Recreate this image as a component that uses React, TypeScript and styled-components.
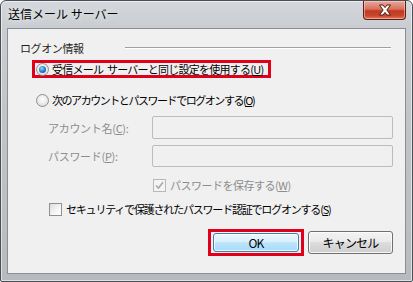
import React from "react";
import styled, { createGlobalStyle } from "styled-components";

const Global = createGlobalStyle`
  html, body { margin: 0; padding: 0; background: #ffffff; }
  #root { width: 413px; height: 282px; }
`;

const FONT = `"Noto Sans CJK JP", "Noto Sans", sans-serif`;

const Window = styled.div`
  box-sizing: border-box;
  width: 413px;
  height: 282px;
  border: 1px solid #4a4f55;
  border-radius: 6px 6px 2px 2px;
  background: linear-gradient(180deg, #d4d8dc 0%, #c9cdd1 10%, #c2c5c8 40%, #b8bbbe 100%);
  padding: 0 6px 7px 6px;
  display: flex;
  flex-direction: column;
  font-family: ${FONT};
  font-size: 11px;
  color: #000;
  box-shadow: inset 0 0 0 1px rgba(255, 255, 255, 0.55);
`;

const TitleBar = styled.div`
  height: 27px;
  display: flex;
  align-items: flex-start;
  justify-content: space-between;
  flex-shrink: 0;
`;

const Title = styled.div`
  padding: 6px 0 0 1px;
  font-size: 12px;
  line-height: 14px;
  color: #000;
  text-shadow: 0 0 6px rgba(255, 255, 255, 0.9);
`;

const CloseButton = styled.div`
  box-sizing: border-box;
  width: 43px;
  height: 19px;
  border: 1px solid #5a1f17;
  border-top: none;
  border-radius: 0 0 4px 4px;
  background: linear-gradient(180deg, #e9a99c 0%, #d9705d 45%, #c0391f 55%, #c7452c 80%, #e07558 100%);
  display: flex;
  align-items: center;
  justify-content: center;
  box-shadow: inset 0 0 0 1px rgba(255, 220, 210, 0.5);
`;

const Client = styled.div`
  flex: 1;
  box-sizing: border-box;
  border: 1px solid #8b8f94;
  background: #f0f0f0;
  display: flex;
  flex-direction: column;
  padding: 11px 0 0 0;
`;

const GroupHeader = styled.div`
  display: flex;
  align-items: center;
  height: 16px;
  padding: 0 14px 0 12px;
`;

const GroupLabel = styled.span`
  color: #1e1e1e;
  width: 105px;
  letter-spacing: -0.4px;
`;

const GroupLine = styled.div`
  flex: 1;
  height: 0;
  border-top: 1px solid #a0a0a0;
  border-bottom: 1px solid #ffffff;
`;

const Highlight = styled.div`
  box-sizing: border-box;
  align-self: flex-start;
  margin: 4px 0 0 24px;
  width: 239px;
  height: 18px;
  border: 3px solid #e1001a;
  display: flex;
  align-items: center;
  padding-left: 1px;
`;

const RadioRow = styled.label<{ $indent?: number; $top?: number }>`
  display: flex;
  align-items: center;
  height: 16px;
  margin: ${(p) => p.$top ?? 0}px 0 0 ${(p) => p.$indent ?? 0}px;
  gap: 3px;
  white-space: nowrap;
`;

const Text = styled.span<{ $ls: number }>`
  letter-spacing: ${(p) => p.$ls}px;
`;

const Gap = styled.span`
  display: inline-block;
  width: 2px;
`;

const RadioDot = styled.span<{ $checked?: boolean }>`
  box-sizing: border-box;
  width: 13px;
  height: 13px;
  border-radius: 50%;
  border: 1px solid #8e8f8f;
  background: radial-gradient(circle at 50% 40%, #ffffff 0%, #e6e6e6 60%, #cfcfcf 100%);
  display: flex;
  align-items: center;
  justify-content: center;
  flex-shrink: 0;
  &::after {
    content: "";
    display: ${(p) => (p.$checked ? "block" : "none")};
    width: 7px;
    height: 7px;
    border-radius: 50%;
    background: radial-gradient(circle at 40% 35%, #9fd6ff 0%, #2f86d6 45%, #0b3f86 100%);
  }
`;

const Underline = styled.span`
  text-decoration: underline;
  text-underline-offset: 1px;
`;

const FieldRow = styled.div<{ $top: number; $h: number }>`
  display: flex;
  align-items: center;
  height: ${(p) => p.$h}px;
  margin: ${(p) => p.$top}px 0 0 0;
  padding: 0 12px 0 40px;
`;

const FieldLabel = styled.span`
  width: 104px;
  color: #8d8d8d;
  white-space: nowrap;
  letter-spacing: -0.3px;
`;

const TextBox = styled.div`
  box-sizing: border-box;
  flex: 1;
  height: 100%;
  border: 1px solid #bcbcbc;
  border-radius: 2px;
  background: #f0f0f0;
`;

const CheckRow = styled.div<{ $indent: number; $top: number; $disabled?: boolean }>`
  display: flex;
  align-items: center;
  height: 16px;
  gap: 4px;
  margin: ${(p) => p.$top}px 0 0 ${(p) => p.$indent}px;
  color: ${(p) => (p.$disabled ? "#8d8d8d" : "#000")};
  white-space: nowrap;
`;

const Box = styled.span<{ $disabled?: boolean }>`
  box-sizing: border-box;
  width: 13px;
  height: 13px;
  border: 1px solid ${(p) => (p.$disabled ? "#b8b8b8" : "#8e8f8f")};
  background: ${(p) =>
    p.$disabled ? "#f4f4f4" : "linear-gradient(135deg, #dcdcdc 0%, #f6f6f6 60%, #ffffff 100%)"};
  display: flex;
  align-items: center;
  justify-content: center;
  flex-shrink: 0;
`;

const ButtonBar = styled.div`
  display: flex;
  justify-content: flex-end;
  align-items: center;
  gap: 4px;
  margin: 12px 12px 0 0;
`;

const OkFrame = styled.div`
  box-sizing: border-box;
  border: 3px solid #e1001a;
  padding: 1px 2px;
  width: 96px;
  height: 27px;
  display: flex;
`;

const Button = styled.div<{ $primary?: boolean }>`
  box-sizing: border-box;
  width: ${(p) => (p.$primary ? "86px" : "85px")};
  height: ${(p) => (p.$primary ? "100%" : "23px")};
  border: 1px solid ${(p) => (p.$primary ? "#3c7fb1" : "#707070")};
  border-radius: 3px;
  background: ${(p) =>
    p.$primary
      ? "linear-gradient(180deg, #eaf6fd 0%, #d9f0fc 45%, #bee6fd 50%, #a7d9f5 100%)"
      : "linear-gradient(180deg, #f2f2f2 0%, #ebebeb 45%, #dddddd 50%, #cfcfcf 100%)"};
  box-shadow: inset 0 0 0 1px rgba(255, 255, 255, 0.8);
  display: flex;
  align-items: center;
  justify-content: center;
  color: #000;
  font-size: 12px;
  letter-spacing: -0.8px;
`;

const CloseIcon = () => (
  <svg width="14" height="12" viewBox="0 0 14 12">
    <path
      d="M1.5 1 L5 1 L7 3.6 L9 1 L12.5 1 L8.9 6 L12.5 11 L9 11 L7 8.4 L5 11 L1.5 11 L5.1 6 Z"
      fill="#ffffff"
      stroke="#4b1a12"
      strokeWidth="1"
      strokeLinejoin="round"
    />
  </svg>
);

const Check = () => (
  <svg width="9" height="9" viewBox="0 0 9 9">
    <path d="M1 4.5 L3.5 7 L8 1.2" fill="none" stroke="#a8a8a8" strokeWidth="1.6" />
  </svg>
);

export default function App() {
  return (
    <>
      <Global />
      <Window>
        <TitleBar>
          <Title>送信メール サーバー</Title>
          <CloseButton>
            <CloseIcon />
          </CloseButton>
        </TitleBar>
        <Client>
          <GroupHeader>
            <GroupLabel>ログオン情報</GroupLabel>
            <GroupLine />
          </GroupHeader>
          <Highlight>
            <RadioRow>
              <RadioDot $checked />
              <Text $ls={-0.75}>
                受信メール<Gap /> サーバーと同じ設定を使用する(<Underline>U</Underline>)
              </Text>
            </RadioRow>
          </Highlight>
          <RadioRow $indent={28} $top={14}>
            <RadioDot />
            <Text $ls={-1.45}>
              次のアカウントとパスワードでログオンする(<Underline>O</Underline>)
            </Text>
          </RadioRow>
          <FieldRow $top={8} $h={23}>
            <FieldLabel>
              アカウント名(<Underline>C</Underline>):
            </FieldLabel>
            <TextBox />
          </FieldRow>
          <FieldRow $top={6} $h={22}>
            <FieldLabel>
              パスワード(<Underline>P</Underline>):
            </FieldLabel>
            <TextBox />
          </FieldRow>
          <CheckRow $indent={145} $top={10} $disabled>
            <Box $disabled>
              <Check />
            </Box>
            <Text $ls={-0.5}>
              パスワードを保存する(<Underline>W</Underline>)
            </Text>
          </CheckRow>
          <CheckRow $indent={41} $top={8}>
            <Box />
            <Text $ls={-1.2}>
              セキュリティで保護されたパスワード認証でログオンする(<Underline>S</Underline>)
            </Text>
          </CheckRow>
          <ButtonBar>
            <OkFrame>
              <Button $primary>OK</Button>
            </OkFrame>
            <Button>キャンセル</Button>
          </ButtonBar>
        </Client>
      </Window>
    </>
  );
}
